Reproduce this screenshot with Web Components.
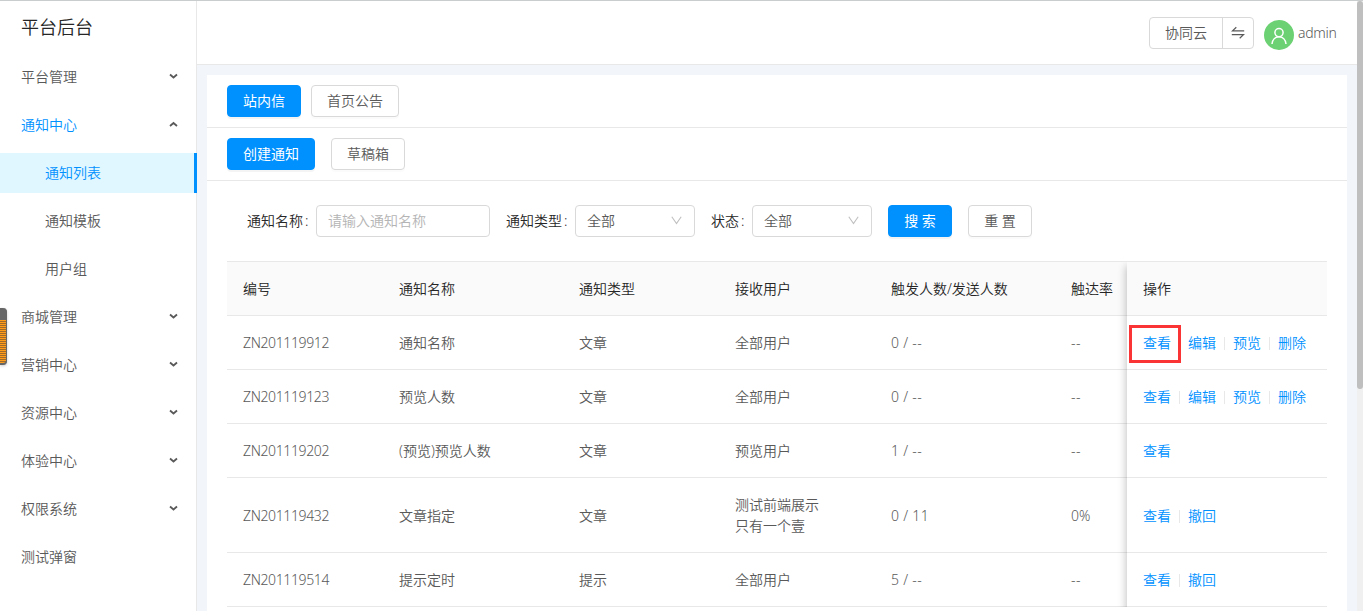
<!DOCTYPE html>
<html lang="zh-CN">
<head>
<meta charset="utf-8">
<title>平台后台</title>
<style>
  body {
    margin: 0;
    height: 611px;
    overflow: hidden;
    font-family: "Noto Sans", "Noto Sans CJK SC", sans-serif;
    font-weight: 350;
    font-size: 14px;
    line-height: 21px;
    color: #595959;
    background: #f2f6fa;
  }
</style>
</head>
<body>
<admin-app></admin-app>
<script>
class UiButton extends HTMLElement {
  connectedCallback() {
    this.attachShadow({ mode: 'open' });
    this.shadowRoot.innerHTML = `
      <style>
        :host {
          display: inline-flex;
          box-sizing: border-box;
          height: 32px;
          padding: 0 15px 1px;
          align-items: center;
          border: 1px solid #d9d9d9;
          border-radius: 4px;
          background: #fff;
          color: #595959;
          box-shadow: 0 2px 0 rgba(0, 0, 0, 0.015);
          white-space: nowrap;
          cursor: pointer;
        }
        :host([primary]) {
          background: #0091ff;
          border-color: #0091ff;
          color: #fff;
          font-weight: 400;
          box-shadow: 0 2px 0 rgba(0, 0, 0, 0.045);
        }
        :host([spaced]) {
          width: 64px;
          justify-content: center;
          padding: 0 0 1px;
        }
      </style>
      <slot></slot>
    `;
  }
}
customElements.define('ui-button', UiButton);

class MenuItem extends HTMLElement {
  connectedCallback() {
    const arrow = this.hasAttribute('open') ? 'M1 5 L4.5 2 L8 5' : 'M1 1.5 L4.5 4.5 L8 1.5';
    this.attachShadow({ mode: 'open' });
    this.shadowRoot.innerHTML = `
      <style>
        :host {
          display: flex;
          box-sizing: border-box;
          height: 40px;
          padding: 0 18px 2px 21px;
          align-items: center;
          justify-content: space-between;
          margin-bottom: 8px;
        }
        :host([open]) {
          color: #0091ff;
        }
        :host([sub]) {
          padding-left: 45px;
        }
        :host([selected]) {
          color: #0091ff;
          background: #e0f7ff;
          border-right: 3px solid #0091ff;
          margin-right: -1px;
        }
        svg {
          display: block;
        }
      </style>
      <span><slot></slot></span>
      ${this.hasAttribute('leaf') || this.hasAttribute('sub') ? '' : `
        <svg width="9" height="6" viewBox="0 0 9 6" fill="none" stroke="#595959" stroke-width="1.8"><path d="${arrow}"/></svg>
      `}
    `;
  }
}
customElements.define('menu-item', MenuItem);

class SideBar extends HTMLElement {
  connectedCallback() {
    this.attachShadow({ mode: 'open' });
    this.shadowRoot.innerHTML = `
      <style>
        :host {
          display: block;
          box-sizing: border-box;
          width: 197px;
          flex: none;
          background: #fff;
          border-right: 1px solid #e8e8e8;
        }
        h1 {
          margin: 0;
          height: 56px;
          padding-left: 21px;
          line-height: 52px;
          font-size: 18px;
          font-weight: inherit;
          color: #262626;
        }
      </style>
      <h1>平台后台</h1>
      <nav>
        <menu-item>平台管理</menu-item>
        <menu-item open>通知中心</menu-item>
        <menu-item sub selected>通知列表</menu-item>
        <menu-item sub>通知模板</menu-item>
        <menu-item sub>用户组</menu-item>
        <menu-item>商城管理</menu-item>
        <menu-item>营销中心</menu-item>
        <menu-item>资源中心</menu-item>
        <menu-item>体验中心</menu-item>
        <menu-item>权限系统</menu-item>
        <menu-item leaf>测试弹窗</menu-item>
      </nav>
    `;
  }
}
customElements.define('side-bar', SideBar);

class TopBar extends HTMLElement {
  connectedCallback() {
    this.attachShadow({ mode: 'open' });
    this.shadowRoot.innerHTML = `
      <style>
        :host {
          display: flex;
          box-sizing: border-box;
          height: 64px;
          padding-right: 20px;
          align-items: center;
          justify-content: flex-end;
          background: #fff;
          border-bottom: 1px solid #e8e8e8;
        }
        .switch {
          display: flex;
          box-sizing: border-box;
          width: 105px;
          height: 32px;
          border: 1px solid #d9d9d9;
          border-radius: 4px;
        }
        .name {
          width: 72px;
          line-height: 30px;
          text-align: center;
          border-right: 1px solid #d9d9d9;
        }
        .swap {
          flex: 1;
          display: flex;
          align-items: center;
          justify-content: center;
        }
        .avatar {
          margin: 4px 4px 0 10px;
          display: block;
        }
        .user {
          width: 39px;
          white-space: nowrap;
          letter-spacing: -0.3px;
        }
        svg {
          display: block;
        }
      </style>
      <div class="switch">
        <div class="name">协同云</div>
        <div class="swap">
          <svg width="14" height="14" viewBox="0 0 14 14" fill="none" stroke="#595959" stroke-width="1.2"><path d="M13.200 4.900H1.500L5.300 1.300M.8 8.600h11.700L8.700 12.200"/></svg>
        </div>
      </div>
      <svg class="avatar" width="30" height="30" viewBox="0 0 30 30">
        <circle cx="15" cy="15" r="15" fill="#6bd172"/>
        <g fill="none" stroke="#fff" stroke-width="1.5">
          <circle cx="15" cy="12.6" r="4.1"/>
          <path d="M8 24c.4-4.400 3.300-7.200 7-7.200s6.600 2.800 7 7.200"/>
        </g>
      </svg>
      <span class="user">admin</span>
    `;
  }
}
customElements.define('top-bar', TopBar);

class FormField extends HTMLElement {
  connectedCallback() {
    const select = this.hasAttribute('select');
    this.attachShadow({ mode: 'open' });
    this.shadowRoot.innerHTML = `
      <style>
        :host {
          display: flex;
          align-items: center;
          margin-right: 16px;
        }
        .label {
          color: #262626;
          display: flex;
          padding-bottom: 1px;
        }
        .label::after {
          content: ":";
          box-sizing: border-box;
          width: 13px;
          padding-left: 2px;
        }
        .box {
          display: flex;
          box-sizing: border-box;
          width: ${select ? 120 : 174}px;
          height: 32px;
          padding: 0 12px 1px 11px;
          align-items: center;
          justify-content: space-between;
          border: 1px solid #d9d9d9;
          border-radius: 4px;
          background: #fff;
          color: ${select ? '#595959' : '#b4b4b4'};
        }
      </style>
      <div class="label">${this.getAttribute('label')}</div>
      <div class="box">
        <slot></slot>
        ${select ? '<svg width="11" height="9" viewBox="0 0 11 9" fill="none" stroke="#bfbfbf" stroke-width="1.1"><path d="M.8 .8L5.500 7.600 10.200 .8"/></svg>' : ''}
      </div>
    `;
  }
}
customElements.define('form-field', FormField);

const rows = [
  ['ZN201119912', '通知名称', '文章', '全部用户', '0 / --', '--', ['查看', '编辑', '预览', '删除']],
  ['ZN201119123', '预览人数', '文章', '全部用户', '0 / --', '--', ['查看', '编辑', '预览', '删除']],
  ['ZN201119202', '(预览)预览人数', '文章', '预览用户', '1 / --', '--', ['查看']],
  ['ZN201119432', '文章指定', '文章', '测试前端展示<br>只有一个壹', '0 / 11', '0%', ['查看', '撤回']],
  ['ZN201119514', '提示定时', '提示', '全部用户', '5 / --', '--', ['查看', '撤回']],
];

class NoticeTable extends HTMLElement {
  connectedCallback() {
    const head = ['编号', '通知名称', '通知类型', '接收用户', '触发人数/发送人数', '触达率', '操作'];
    this.attachShadow({ mode: 'open' });
    this.shadowRoot.innerHTML = `
      <style>
        :host {
          display: block;
          position: relative;
          border-top: 1px solid #e8e8e8;
        }
        .row {
          display: grid;
          grid-template-columns: 156px 180px 156px 156px 180px 72px 200px;
          border-bottom: 1px solid #e8e8e8;
        }
        .row > div {
          display: flex;
          align-items: center;
          padding: 16px 0 16px 16px;
          white-space: nowrap;
        }
        .head {
          background: #fafafa;
          color: #262626;
        }
        .row .id {
          letter-spacing: -0.38px;
        }
        .row .pair {
          letter-spacing: 0.3px;
        }
        .row .rate {
          letter-spacing: 0.6px;
        }
        .row .full {
          letter-spacing: 0;
        }
        a {
          color: #0091ff;
        }
        a + a::before {
          content: "";
          display: inline-block;
          width: 1px;
          height: 13px;
          margin: 0 8px;
          vertical-align: -2px;
          background: #e8e8e8;
        }
        /* shadow on the left edge of the fixed column */
        .edge {
          position: absolute;
          top: 0;
          bottom: 0;
          left: 890px;
          width: 10px;
          overflow: hidden;
        }
        .edge::after {
          content: "";
          position: absolute;
          top: 4px;
          bottom: -20px;
          left: 10px;
          width: 20px;
          box-shadow: -1px 0 8px rgba(0, 0, 0, 0.24);
        }
        .mark {
          position: absolute;
          box-sizing: border-box;
          left: 902px;
          top: 63px;
          width: 52px;
          height: 38px;
          border: 3px solid #fa3434;
        }
      </style>
      <div class="row head">${head.map(t => `<div>${t}</div>`).join('')}</div>
      ${rows.map(([id, name, type, user, pair, rate, actions]) => `
        <div class="row">
          <div class="id">${id}</div>
          <div>${name}</div>
          <div>${type}</div>
          <div><span>${user}</span></div>
          <div class="pair">${pair}</div>
          <div class="rate ${rate === '--' ? '' : 'full'}">${rate}</div>
          <div>${actions.map(a => `<a>${a}</a>`).join('')}</div>
        </div>
      `).join('')}
      <div class="edge"></div>
      <div class="mark"></div>
    `;
  }
}
customElements.define('notice-table', NoticeTable);

class AdminApp extends HTMLElement {
  connectedCallback() {
    this.attachShadow({ mode: 'open' });
    this.shadowRoot.innerHTML = `
      <style>
        :host {
          display: flex;
          box-sizing: border-box;
          height: 611px;
          border-top: 1px solid #c9cdcd;
          overflow: hidden;
        }
        main {
          flex: 1;
          min-width: 0;
        }
        .panel {
          margin: 10px 10px 0;
          padding-bottom: 20px;
          background: #fff;
        }
        .bar {
          display: flex;
          box-sizing: border-box;
          height: 53px;
          padding: 10px 20px;
          gap: 10px;
          border-bottom: 1px solid #e8e8e8;
        }
        .bar.wide {
          gap: 16px;
        }
        .search {
          display: flex;
          padding: 24px 40px;
        }
        .search ui-button {
          margin-right: 16px;
        }
        notice-table {
          margin: 0 20px;
        }
        .scroll {
          width: 6px;
          flex: none;
          background: #f0f0f0;
        }
        .thumb {
          height: 388px;
          border-radius: 3px;
          background: #bfbfbf;
        }
        .meter {
          position: absolute;
          left: 0;
          top: 308px;
          box-sizing: border-box;
          width: 7px;
          height: 57px;
          border-right: 1px solid #666;
          border-radius: 0 4px 4px 0;
          overflow: hidden;
          background: #666;
          box-shadow: 0 1px 3px rgba(0, 0, 0, 0.2);
        }
        .meter::after {
          content: "";
          display: block;
          margin-top: 12px;
          height: 43px;
          border-radius: 0 0 3px 0;
          background: repeating-linear-gradient(#ff9c1b 0 1px, #a06a28 1px 2px);
        }
      </style>
      <side-bar></side-bar>
      <main>
        <top-bar></top-bar>
        <div class="panel">
          <div class="bar">
            <ui-button primary>站内信</ui-button>
            <ui-button>首页公告</ui-button>
          </div>
          <div class="bar wide">
            <ui-button primary>创建通知</ui-button>
            <ui-button>草稿箱</ui-button>
          </div>
          <div class="search">
            <form-field label="通知名称">请输入通知名称</form-field>
            <form-field label="通知类型" select>全部</form-field>
            <form-field label="状态" select>全部</form-field>
            <ui-button primary spaced>搜 索</ui-button>
            <ui-button spaced>重 置</ui-button>
          </div>
          <notice-table></notice-table>
        </div>
      </main>
      <div class="scroll"><div class="thumb"></div></div>
      <div class="meter"></div>
    `;
  }
}
customElements.define('admin-app', AdminApp);
</script>
</body>
</html>
